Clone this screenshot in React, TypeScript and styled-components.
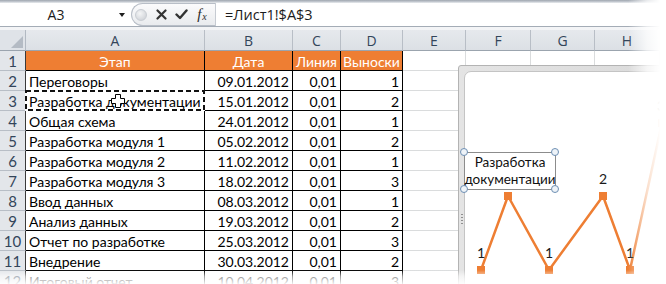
import React from 'react';
import styled, { createGlobalStyle } from 'styled-components';

const GlobalStyle = createGlobalStyle`
	html, body {
		margin: 0;
		padding: 0;
		background: #fff;
	}
`;

const cellFont = `"Lato", "Liberation Sans", sans-serif`;
const uiFont = `"Open Sans", "Liberation Sans", sans-serif`;
const orange = '#ee7e33';

const Window = styled.div`
	position: relative;
	width: 666px;
	height: 284px;
	overflow: hidden;
	background: #fff;
	font-family: ${cellFont};
`;

const TopEdge = styled.div`
	height: 3px;
	background: linear-gradient(#9fa6af, #c9ced5 66%, #eef0f2);
`;

const FormulaBar = styled.div`
	display: flex;
	height: 23px;
	border-bottom: 1px solid #a4acb6;
	background: #fff;
`;

const NameBox = styled.div`
	width: 131px;
	display: flex;
	align-items: center;
	font: 14px ${uiFont};
	color: #1b1b1b;
`;

const NameText = styled.span`
	width: 112px;
	text-align: center;
`;

const DropArrow = styled.span`
	margin-left: 7px;
	border-left: 3.5px solid transparent;
	border-right: 3.5px solid transparent;
	border-top: 4px solid #1e1e1e;
`;

const FuncButtons = styled.div`
	width: 84px;
	box-sizing: border-box;
	display: flex;
	align-items: center;
	padding-left: 3px;
	border: 1px solid #b8bec7;
	border-right: none;
	border-radius: 12px 0 0 12px;
	background: linear-gradient(#fbfbfc, #e9ebee);
`;

const Grip = styled.span`
	width: 12px;
	height: 12px;
	margin-right: 4px;
	border-radius: 50%;
	border: 1px solid #c9cdd3;
	box-sizing: border-box;
	background: radial-gradient(circle at 40% 35%, #f4f5f6, #c8ccd2);
`;

const FuncIcon = styled.span<{ $w: number }>`
	width: ${(p) => p.$w}px;
	display: flex;
	justify-content: center;
	align-items: center;
	color: #333;
`;

const FxGlyph = styled.span`
	font: italic 15px "Liberation Serif", serif;
	color: #2b2b2b;

	sub {
		font-size: 10px;
		vertical-align: -1px;
		margin-left: 1px;
	}
`;

const FormulaInput = styled.div`
	flex: 1;
	display: flex;
	align-items: center;
	padding-left: 9px;
	border-left: 1px solid #c6cbd2;
	font: 14.5px ${uiFont};
	color: #1b1b1b;
`;

const Gap = styled.div`
	height: 3px;
	background: #f3f4f6;
`;

const Sheet = styled.div`
	display: grid;
	grid-template-columns: 26px 179px 88px 48px 62px 63px 65px 64px 65px 1fr;
	grid-template-rows: 21px repeat(12, 20px);
`;

const Corner = styled.div`
	position: relative;
	box-sizing: border-box;
	background: #dfe3e8;
	border-right: 1px solid #b2b9c2;
	border-bottom: 1px solid #9ba4ae;

	&::after {
		content: '';
		position: absolute;
		right: 2px;
		bottom: 2px;
		border-left: 12px solid transparent;
		border-bottom: 12px solid #b4bbc4;
	}
`;

const ColHead = styled.div`
	box-sizing: border-box;
	display: flex;
	align-items: center;
	justify-content: center;
	background: linear-gradient(#e6e9ed, #dce0e5);
	border-right: 1px solid #b8bec6;
	border-bottom: 1px solid #9ba4ae;
	font: 14px ${uiFont};
	color: #33455a;
`;

const RowHead = styled.div`
	box-sizing: border-box;
	display: flex;
	align-items: center;
	justify-content: center;
	background: #e3e6ea;
	border-right: 1px solid #3a3a3a;
	border-bottom: 1px solid #b8bec6;
	font: 15px ${cellFont};
	color: #33455a;
`;

const Cell = styled.div<{ $align?: 'left' | 'right' | 'center'; $table?: boolean; $head?: boolean }>`
	position: relative;
	box-sizing: border-box;
	display: flex;
	align-items: center;
	justify-content: ${(p) => (p.$align === 'right' ? 'flex-end' : p.$align === 'center' ? 'center' : 'flex-start')};
	padding: 1px 3px 0;
	border-right: 1px solid ${(p) => (p.$table ? '#000' : '#dadcdd')};
	border-bottom: 1px solid ${(p) => (p.$table ? '#000' : '#dadcdd')};
	background: ${(p) => (p.$head ? orange : '#fff')};
	color: ${(p) => (p.$head ? '#fff' : '#000')};
	font: 14px ${cellFont};
	white-space: nowrap;
`;

const Marquee = styled.svg`
	position: absolute;
	left: -1px;
	top: -1px;
	pointer-events: none;
`;

const CrossCursor = styled.svg`
	position: absolute;
	left: 84px;
	top: 2px;
`;

const ChartFrame = styled.div`
	position: absolute;
	left: 458px;
	top: 65px;
	width: 240px;
	height: 240px;
	box-sizing: border-box;
	padding: 5px;
	border: 1px solid #b3b3b3;
	border-radius: 3px;
	background: linear-gradient(90deg, #e4e4e4, #d9d9d9);
`;

const ChartArea = styled.div`
	position: relative;
	width: 100%;
	height: 100%;
	box-sizing: border-box;
	border: 1px solid #c4c4c4;
	border-top-left-radius: 7px;
	background: #fff;
`;

const SideHandle = styled.span`
	position: absolute;
	left: 2px;
	top: 148px;
	width: 2px;
	height: 10px;
	background: repeating-linear-gradient(#8f8f8f 0 1px, transparent 1px 3px);
`;

const ChartSvg = styled.svg`
	position: absolute;
	left: -1px;
	top: -1px;
	overflow: visible;
`;

const LabelBox = styled.div`
	position: absolute;
	left: -1px;
	top: 80px;
	width: 92px;
	height: 38px;
	box-sizing: border-box;
	border: 1px solid #8c8c8c;
	display: flex;
	align-items: center;
	justify-content: center;
	text-align: center;
	font: 13.5px/17px ${cellFont};
	color: #111;
`;

const RightFade = styled.div`
	position: absolute;
	top: 0;
	right: 0;
	width: 38px;
	height: 100%;
	background: linear-gradient(90deg, rgba(255, 255, 255, 0), rgba(255, 255, 255, 0.75) 50%, #fff 85%);
	pointer-events: none;
`;

const BottomFade = styled.div`
	position: absolute;
	left: 0;
	bottom: 0;
	width: 100%;
	height: 14px;
	background: linear-gradient(rgba(255, 255, 255, 0), rgba(255, 255, 255, 0.6) 45%, rgba(255, 255, 255, 0.92));
	pointer-events: none;
`;

const columns = ['A', 'B', 'C', 'D', 'E', 'F', 'G', 'H', ''];

const rows = [
	['Этап', 'Дата', 'Линия', 'Выноски'],
	['Переговоры', '09.01.2012', '0,01', '1'],
	['Разработка документации', '15.01.2012', '0,01', '2'],
	['Общая схема', '24.01.2012', '0,01', '1'],
	['Разработка модуля 1', '05.02.2012', '0,01', '2'],
	['Разработка модуля 2', '11.02.2012', '0,01', '1'],
	['Разработка модуля 3', '18.02.2012', '0,01', '3'],
	['Ввод данных', '08.03.2012', '0,01', '1'],
	['Анализ данных', '19.03.2012', '0,01', '2'],
	['Отчет по разработке', '25.03.2012', '0,01', '3'],
	['Внедрение', '30.03.2012', '0,01', '2'],
	['Итоговый отчет', '10.04.2012', '0,01', '3'],
];

// page coordinates of the chart points and their labels
const points = [
	[482, 271],
	[509, 197],
	[550, 271],
	[604, 197],
	[631, 271],
	[663, 124],
];
const labels = [
	{ x: 482, y: 259, t: '1' },
	{ x: 550, y: 259, t: '1' },
	{ x: 604, y: 185, t: '2' },
	{ x: 631, y: 259, t: '1' },
	{ x: 662, y: 112, t: '3' },
];
const handles = [
	[465, 153],
	[556, 153],
	[465, 190],
	[556, 190],
];

const Chart = () => (
	<ChartFrame>
		<SideHandle />
		<ChartArea>
			<ChartSvg width="240" height="240">
				<g transform="translate(-465,-72)">
					<polyline
						points={points.map((p) => p.join(',')).join(' ')}
						fill="none"
						stroke={orange}
						strokeWidth="2.5"
						strokeLinejoin="round"
					/>
					{points.map(([x, y]) => (
						<rect key={x} x={x - 4} y={y - 4} width="8" height="8" fill={orange} />
					))}
					{labels.map((l) => (
						<text key={l.x} x={l.x} y={l.y} textAnchor="middle" fontFamily="Lato, sans-serif" fontSize="14" fill="#1a1a1a">
							{l.t}
						</text>
					))}
				</g>
			</ChartSvg>
			<LabelBox>
				Разработка
				<br />
				документации
			</LabelBox>
			<ChartSvg width="240" height="240">
				<g transform="translate(-465,-72)">
					{handles.map(([x, y]) => (
						<circle key={`${x}-${y}`} cx={x} cy={y} r="3.5" fill="#eef3f8" stroke="#6d8fb3" strokeWidth="1" />
					))}
				</g>
			</ChartSvg>
		</ChartArea>
	</ChartFrame>
);

export default function App() {
	return (
		<Window>
			<GlobalStyle />
			<TopEdge />
			<FormulaBar>
				<NameBox>
					<NameText>A3</NameText>
					<DropArrow />
				</NameBox>
				<FuncButtons>
					<Grip />
					<FuncIcon $w={20}>
						<svg width="11" height="11" viewBox="0 0 11 11">
							<path d="M1.5 1.5 L9.5 9.5 M9.5 1.5 L1.5 9.5" stroke="#333" strokeWidth="2.2" strokeLinecap="round" />
						</svg>
					</FuncIcon>
					<FuncIcon $w={20}>
						<svg width="13" height="11" viewBox="0 0 13 11">
							<path d="M1.5 5.5 L5 9 L11.5 1.5" fill="none" stroke="#333" strokeWidth="2.4" strokeLinecap="round" strokeLinejoin="round" />
						</svg>
					</FuncIcon>
					<FuncIcon $w={22}>
						<FxGlyph>
							f<sub>x</sub>
						</FxGlyph>
					</FuncIcon>
				</FuncButtons>
				<FormulaInput>=Лист1!$A$3</FormulaInput>
			</FormulaBar>
			<Gap />
			<Sheet>
				<Corner />
				{columns.map((c, i) => (
					<ColHead key={i}>{c}</ColHead>
				))}
				{rows.map((r, ri) => (
					<React.Fragment key={ri}>
						<RowHead>{ri + 1}</RowHead>
						{r.map((v, ci) => (
							<Cell
								key={ci}
								$table
								$head={ri === 0}
								$align={ri === 0 ? 'center' : ci === 0 ? 'left' : 'right'}
							>
								{v}
								{ri === 2 && ci === 0 && (
									<>
										<Marquee width="180" height="21">
											<rect x="1" y="1" width="178" height="19" fill="none" stroke="#fff" strokeWidth="2" />
											<rect x="1" y="1" width="178" height="19" fill="none" stroke="#111" strokeWidth="2" strokeDasharray="5 3" />
										</Marquee>
										<CrossCursor width="16" height="16" viewBox="0 0 16 16">
											<path
												d="M5.5 1.5 H10.5 V5.5 H14.5 V10.5 H10.5 V14.5 H5.5 V10.5 H1.5 V5.5 H5.5 Z"
												fill="#fff"
												stroke="#000"
												strokeWidth="1"
											/>
										</CrossCursor>
									</>
								)}
							</Cell>
						))}
						{columns.slice(4).map((_, ci) => (
							<Cell key={`e${ci}`} />
						))}
					</React.Fragment>
				))}
			</Sheet>
			<Chart />
			<RightFade />
			<BottomFade />
		</Window>
	);
}
